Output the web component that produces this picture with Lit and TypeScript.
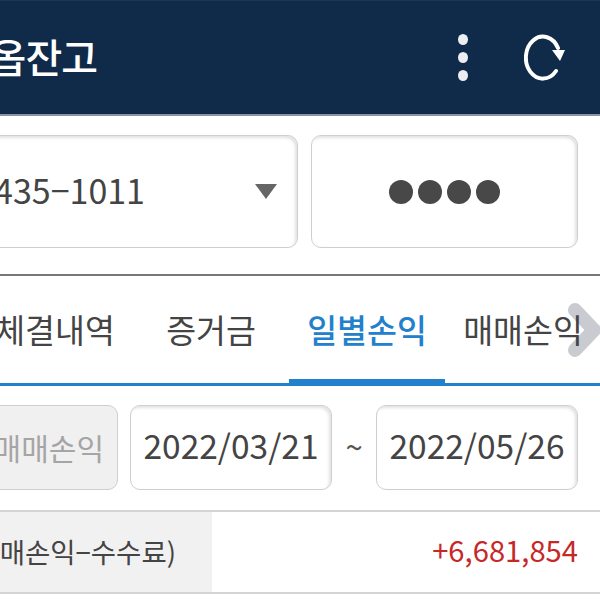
import { LitElement, css, html } from 'lit'
import { customElement } from 'lit/decorators.js'

const TABS = ['체결내역', '증거금', '일별손익', '매매손익']

@customElement('app-root')
export class AppRoot extends LitElement {
  static styles = css`
    :host {
      display: block;
      width: 600px;
      height: 600px;
      overflow: hidden;
      background: #fff;
      color: #444;
      font-family: "Noto Sans CJK KR", "Noto Sans", sans-serif;
    }
    .header {
      height: 116px;
      box-sizing: border-box;
      background: #102a4a;
      border-top: 1px solid #1c3655;
      border-bottom: 2px solid #8a94a1;
      display: flex;
      align-items: center;
      justify-content: flex-end;
      white-space: nowrap;
      padding-right: 16px;
    }
    .title {
      flex: 1;
      display: flex;
      justify-content: flex-end;
      color: #fff;
      font-size: 40px;
      font-weight: 500;
      letter-spacing: -1px;
      margin-right: 361px;
      padding-bottom: 3px;
      min-width: 0;
    }
    .dots {
      width: 10px;
      display: flex;
      flex-direction: column;
      gap: 7px;
      margin-right: 56px;
      margin-bottom: 1px;
    }
    .dots i {
      height: 11px;
      border-radius: 50%;
      background: #eceef1;
    }
    .refresh {
      width: 44px;
      height: 52px;
      margin-right: 16px;
    }
    .account {
      display: flex;
      justify-content: flex-end;
      gap: 13px;
      padding: 19px 22px 0 0;
      height: 113px;
    }
    .box {
      box-sizing: border-box;
      border: 1px solid #cfcfcf;
      border-radius: 10px;
      box-shadow: inset -2px 2px 3px #e2e2e2;
      background: #fff;
      display: flex;
      align-items: center;
    }
    .select {
      flex: none;
      width: 340px;
      margin-left: -42px;
      height: 113px;
      font-size: 34px;
      justify-content: flex-end;
      padding-right: 20px;
    }
    .select span {
      margin-right: 110px;
      padding-bottom: 5px;
      white-space: nowrap;
    }
    .caret {
      width: 0;
      height: 0;
      border-left: 11px solid transparent;
      border-right: 11px solid transparent;
      border-top: 15px solid #666;
    }
    .pin {
      width: 268px;
      height: 113px;
      justify-content: center;
      gap: 5px;
    }
    .pin i {
      width: 24px;
      height: 24px;
      border-radius: 50%;
      background: #484848;
    }
    .tabs {
      position: relative;
      margin-top: 26px;
      height: 112px;
      box-sizing: border-box;
      border-top: 2px solid #777;
      border-bottom: 3px solid #2280cc;
      display: flex;
      justify-content: flex-end;
      margin-right: -1px;
    }
    .tab {
      flex: none;
      position: relative;
      z-index: 1;
      width: 156px;
      height: 110px;
      box-sizing: border-box;
      display: flex;
      justify-content: center;
      padding-top: 30px;
      font-size: 32.5px;
      line-height: 46px;
      white-space: nowrap;
    }
    .tab.active {
      color: #2280cc;
      font-weight: 500;
      border-bottom: 7px solid #2280cc;
    }
    .next {
      position: absolute;
      right: 1px;
      top: 26px;
      width: 33px;
      height: 56px;
    }
    .filter {
      display: flex;
      justify-content: flex-end;
      align-items: center;
      padding: 19px 22px 0 0;
      font-size: 33.5px;
    }
    .date {
      width: 202px;
      height: 85px;
      justify-content: center;
      white-space: nowrap;
      padding-bottom: 6px;
    }
    .kind {
      width: 160px;
      height: 85px;
      margin-left: -42px;
      margin-right: 12px;
      background: #f0f0f0;
      box-shadow: none;
      color: #a5a5a5;
      font-size: 30px;
      justify-content: flex-end;
      padding-right: 13px;
      padding-bottom: 2px;
      white-space: nowrap;
    }
    .tilde {
      width: 44px;
      text-align: center;
      color: #555;
      font-size: 31px;
      padding-bottom: 4px;
    }
    .row {
      margin-top: 20px;
      height: 84px;
      box-sizing: border-box;
      border-top: 2px solid #d5d5d5;
      border-bottom: 2px solid #d5d5d5;
      display: flex;
      justify-content: space-between;
      align-items: center;
      padding-right: 22px;
    }
    .label {
      width: 212px;
      height: 100%;
      background: #f1f1f1;
      display: flex;
      align-items: center;
      justify-content: flex-end;
      box-sizing: border-box;
      padding: 0 36px 2px 0;
      font-size: 27.5px;
      white-space: nowrap;
    }
    .value {
      color: #c62828;
      font-size: 29.2px;
      padding-bottom: 6px;
    }
  `

  render() {
    return html`
      <div class="header">
        <div class="title">선옵잔고</div>
        <div class="dots"><i></i><i></i><i></i></div>
        <svg class="refresh" viewBox="0 0 44 52" fill="none">
          <path d="M32 39a17 21 0 1 1 2-23" stroke="#fff" stroke-width="4" stroke-linecap="round" />
          <path d="M28 18h13l-5 11z" fill="#fff" />
        </svg>
      </div>
      <div class="account">
        <div class="box select"><span>435−1011</span><div class="caret"></div></div>
        <div class="box pin"><i></i><i></i><i></i><i></i></div>
      </div>
      <div class="tabs">
        ${TABS.map(t => html`<div class="tab ${t === '일별손익' ? 'active' : ''}">${t}</div>`)}
        <svg class="next" viewBox="0 0 33 56">
          <path d="M8 8l19 20L8 48" fill="none" stroke="#c9cbd0" stroke-width="14" stroke-linejoin="round" stroke-linecap="round" />
        </svg>
      </div>
      <div class="filter">
        <div class="box kind">매매손익</div>
        <div class="box date">2022/03/21</div>
        <div class="tilde">~</div>
        <div class="box date">2022/05/26</div>
      </div>
      <div class="row">
        <div class="label">매매손익−수수료)</div>
        <div class="value">+6,681,854</div>
      </div>
    `
  }
}
